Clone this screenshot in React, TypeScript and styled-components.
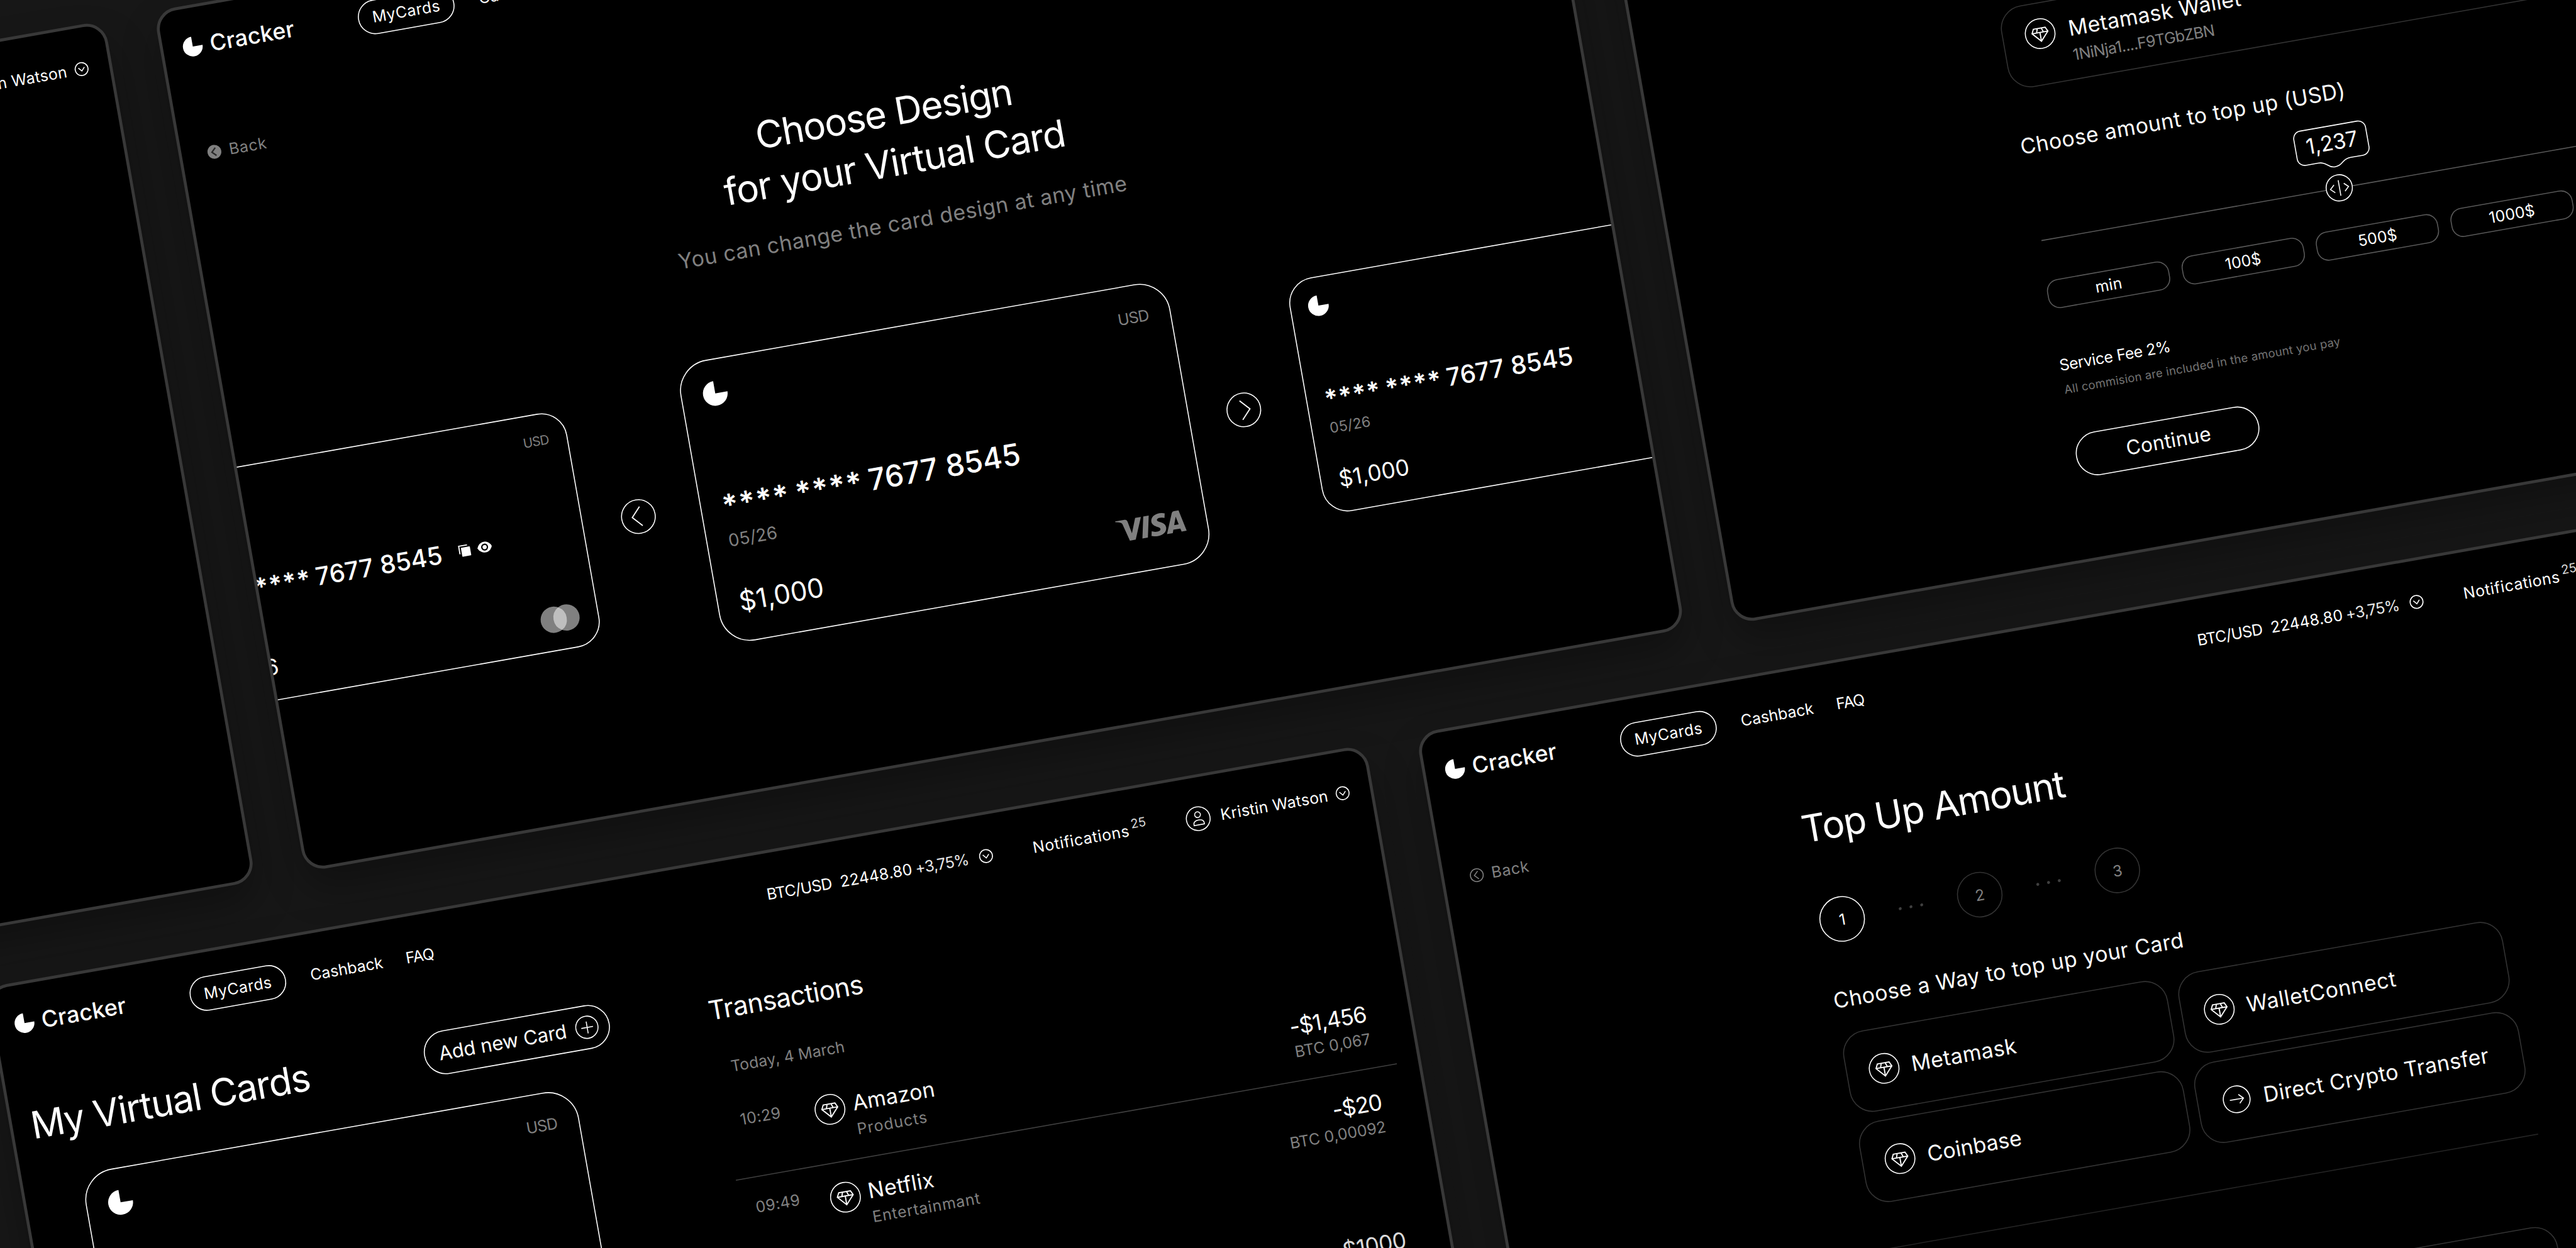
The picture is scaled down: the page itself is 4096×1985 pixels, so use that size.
import React from 'react';
import styled, { createGlobalStyle, css } from 'styled-components';
import { SiVisa } from 'react-icons/si';

const GlobalStyle = createGlobalStyle`
  *, *::before, *::after { box-sizing: border-box; }
  html, body { margin: 0; background: #171717; }
  body {
    color: #fff;
    font-family: Inter, "Liberation Sans", sans-serif;
    line-height: 1;
    white-space: nowrap;
    overflow: hidden;
  }
  svg { display: block; overflow: visible; flex: none; }
`;

const muted = '#808080';

/* ---------- board ---------- */

const Viewport = styled.div`
  width: 100vw;
  height: 100vh;
  overflow: hidden;
  background: #171717;
`;

const Board = styled.div`
  position: relative;
  transform-origin: 0 0;
  transform: scale(0.78769) rotate(-10deg);
`;

const Screen = styled.section<{ $x: number; $y: number; $h?: number }>`
  position: absolute;
  left: ${(p) => p.$x}px;
  top: ${(p) => p.$y}px;
  width: 2829px;
  height: ${(p) => p.$h ?? 1765}px;
  display: flex;
  flex-direction: column;
  border: 6px solid #383838;
  border-radius: 44px;
  background: #000;
  overflow: hidden;
  box-shadow: 0 40px 80px rgba(0, 0, 0, 0.3);
`;

/* ---------- type ---------- */

const Text = styled.span<{ $ls?: number }>`
  font-size: 31.5px;
  letter-spacing: ${(p) => p.$ls ?? 0}em;
`;
const Muted = styled(Text)`
  color: ${muted};
`;
const Label = styled(Text)`
  font-size: 43px;
`;
const Title = styled.h1<{ $lh?: number }>`
  margin: 0;
  font-size: 76px;
  font-weight: 400;
  letter-spacing: -0.023em;
  line-height: ${(p) => p.$lh ?? 76}px;
`;
const Subtitle = styled.h2`
  margin: 0;
  font-size: 43px;
  font-weight: 400;
  letter-spacing: 0.014em;
`;

/* ---------- icons ---------- */

const Ring = styled.span<{ $size: number; $color?: string }>`
  flex: none;
  width: ${(p) => p.$size}px;
  height: ${(p) => p.$size}px;
  display: grid;
  place-items: center;
  border: 2px solid ${(p) => p.$color ?? '#fff'};
  border-radius: 50%;
  color: ${(p) => p.$color ?? '#fff'};
  background: #000;
`;

const Stroke = styled.svg`
  fill: none;
  stroke: currentColor;
  stroke-width: 2;
`;

const Glyph = ({ d, w = 2 }: { d: string; w?: number }) => (
  <Stroke width="20" height="20" viewBox="-10 -10 20 20">
    <path d={d} strokeWidth={w} />
  </Stroke>
);

const Diamond = () => (
  <Ring $size={62}>
    <Glyph
      w={2.4}
      d="M-12 -11H12L16.2 -2.4L0 15.6L-16.2 -2.4ZM-16.2 -2.4H16.2M-4 -11L-7 -2.4M4 -11L7 -2.4M0 -2.4V15"
    />
  </Ring>
);

const ChevronDown = () => (
  <Ring $size={28}>
    <Glyph w={2} d="M-6.2 -3.2L0 3.8L6.2 -3.2" />
  </Ring>
);

const PieShape = styled.svg`
  width: calc(var(--pie, 40px) * var(--k, 1));
  height: calc(var(--pie, 40px) * var(--k, 1));
  fill: #fff;
`;
const Pie = () => (
  <PieShape viewBox="0 0 40 40">
    <path d="M20 20V0A20 20 0 1 0 40 20Z" />
  </PieShape>
);

/* ---------- header ---------- */

const HeaderBar = styled.header`
  flex: none;
  height: 118px;
  padding: 48px 42px 0 40px;
  display: flex;
  align-items: center;
`;
const Brand = styled.div`
  width: 358px;
  padding-bottom: 11px;
  display: flex;
  align-items: center;
  gap: 15px;
  font-size: 45.5px;
  font-weight: 500;
  letter-spacing: 0.004em;
`;
const Nav = styled.nav`
  display: flex;
  align-items: center;
  gap: 47px;
`;
const NavPill = styled.span`
  width: 197px;
  height: 70px;
  margin-right: 3px;
  display: grid;
  place-items: center;
  border: 2px solid #fff;
  border-radius: 35px;
  font-size: 31.5px;
  letter-spacing: 0.019em;
`;
const Account = styled.div`
  margin-left: auto;
  display: flex;
  align-items: center;
`;
const Ticker = styled.div`
  display: flex;
  align-items: center;
  gap: 17px;
  margin-right: 82px;
`;
const Change = styled(Text)`
  margin: 0 5px 0 -11px;
  color: #e6e6e6;
`;
const Alerts = styled.div`
  display: flex;
  align-items: center;
  gap: 5px;
  margin-right: 80px;
`;
const Count = styled.span`
  padding-bottom: 27px;
  font-size: 25.5px;
  color: #d9d9d9;
`;
const User = styled.div`
  display: flex;
  align-items: center;
  gap: 21px;
`;
const UserChevron = styled.div`
  margin-left: -5px;
`;

const Header = () => (
  <HeaderBar>
    <Brand>
      <Pie />
      <span>Cracker</span>
    </Brand>
    <Nav>
      <NavPill>MyCards</NavPill>
      <Text>Cashback</Text>
      <Text $ls={-0.035}>FAQ</Text>
    </Nav>
    <Account>
      <Ticker>
        <Text $ls={-0.026}>BTC/USD</Text>
        <Text $ls={0.011}>22448.80</Text>
        <Change $ls={-0.033}>+3,75%</Change>
        <ChevronDown />
      </Ticker>
      <Alerts>
        <Text $ls={0.024}>Notifications</Text>
        <Count>25</Count>
      </Alerts>
      <User>
        <Ring $size={50}>
          <Glyph d="M0 -14A5.8 5.8 0 1 1 0 -2.4A5.8 5.8 0 1 1 0 -14ZM-10.5 12.5V10C-10.5 5.5 -6.5 2.8 0 2.8S10.5 5.5 10.5 10V12.5Z" />
        </Ring>
        <Text $ls={0.013}>Kristin Watson</Text>
        <UserChevron>
          <ChevronDown />
        </UserChevron>
      </User>
    </Account>
  </HeaderBar>
);

/* ---------- back link ---------- */

const BackLink = styled.a`
  height: 28px;
  display: flex;
  align-items: center;
  gap: 16px;
  color: ${muted};
`;
const SolidDot = styled.span`
  width: 28px;
  height: 28px;
  display: grid;
  place-items: center;
  border-radius: 50%;
  background: ${muted};
  color: #2a2a2a;
`;
const backPath = 'M3 -8L-5 0L3 8';

const Back = ({ solid }: { solid?: boolean }) => (
  <BackLink>
    {solid ? (
      <SolidDot>
        <Glyph w={3} d={backPath} />
      </SolidDot>
    ) : (
      <Ring $size={28} $color={muted}>
        <Glyph d={backPath} />
      </Ring>
    )}
    <Text $ls={0.028}>Back</Text>
  </BackLink>
);

/* ---------- bank card ---------- */

const k = (n: number) => `calc(${n}px * var(--k))`;

const CardFrame = styled.article<{ $k: number }>`
  --k: ${(p) => p.$k};
  --pie: 50px;
  flex: none;
  width: ${k(1004)};
  height: ${k(575)};
  padding: ${k(43)} ${k(43)} 0 ${k(43)};
  display: flex;
  flex-direction: column;
  border: 2px solid #fff;
  border-radius: ${k(63)};
`;
const CardTop = styled.div`
  height: ${k(50)};
  display: flex;
  justify-content: space-between;
`;
const Currency = styled.span`
  padding-top: ${k(5)};
  font-size: ${k(31.5)};
  letter-spacing: -0.04em;
  color: ${muted};
`;
const CardNumber = styled.div`
  margin-top: ${k(171)};
  height: ${k(60)};
  display: flex;
  align-items: center;
  gap: ${k(12)};
  font-size: ${k(60.5)};
  font-weight: 500;
`;
const Mask = styled.span`
  font-weight: 600;
  letter-spacing: 0.03em;
`;
const CardTools = styled.span`
  margin-left: ${k(30)};
  display: flex;
  align-items: center;
  gap: ${k(17)};
`;
const Expiry = styled.span`
  margin-top: ${k(24)};
  font-size: ${k(35)};
  letter-spacing: 0.005em;
  color: ${muted};
`;
const CardBottom = styled.div`
  margin-top: ${k(76)};
  height: ${k(63)};
  display: flex;
  align-items: center;
  justify-content: space-between;
`;
const Balance = styled.span`
  font-size: ${k(54)};
`;
const VisaMark = styled(SiVisa)`
  width: 139px;
  height: 139px;
  margin: -50px 0 -38px;
  color: ${muted};
`;
const MasterMark = styled.svg`
  width: ${k(95)};
  height: ${k(63.7)};
  margin-top: ${k(12)};
  margin-right: ${k(1)};
`;
const CopyIcon = styled.svg`
  width: ${k(28)};
  height: ${k(28)};
`;
const EyeIcon = styled.svg`
  width: ${k(35)};
  height: ${k(26)};
`;

type CardProps = { scale?: number; balance: string; brand?: 'visa' | 'mastercard'; tools?: boolean };

const BankCard = ({ scale = 1, balance, brand, tools }: CardProps) => (
  <CardFrame $k={scale}>
    <CardTop>
      <Pie />
      <Currency>USD</Currency>
    </CardTop>
    <CardNumber>
      <Mask>****</Mask>
      <Mask>****</Mask>
      <span>7677 8545</span>
      {tools && (
        <CardTools>
          <CopyIcon viewBox="0 0 28 28" fill="#fff">
            <rect x="6" y="6" width="22" height="22" rx="1.5" />
            <path d="M1.4 21V1.4H22" fill="none" stroke="#fff" strokeWidth="2.8" />
          </CopyIcon>
          <EyeIcon viewBox="0 0 35 26">
            <path d="M0 13C3 5 9.5 0 17.5 0S32 5 35 13C32 21 25.5 26 17.5 26S3 21 0 13Z" fill="#fff" />
            <circle cx="17.5" cy="13" r="6.8" fill="#fff" stroke="#000" strokeWidth="3.4" />
          </EyeIcon>
        </CardTools>
      )}
    </CardNumber>
    <Expiry>05/26</Expiry>
    <CardBottom>
      <Balance>{balance}</Balance>
      {brand === 'visa' && <VisaMark />}
      {brand === 'mastercard' && (
        <MasterMark viewBox="0 0 94 63">
          <circle cx="31.5" cy="31.5" r="31.5" fill="#808080" />
          <circle cx="62.5" cy="31.5" r="31.5" fill="#808080" />
          <path d="M47 4.1A31.5 31.5 0 0 1 47 58.9A31.5 31.5 0 0 1 47 4.1Z" fill="#bfbfbf" />
        </MasterMark>
      )}
    </CardBottom>
  </CardFrame>
);

/* ---------- design picker ---------- */

const PickerBack = styled.div`
  margin: 163px 0 0 52px;
`;
const Intro = styled.div`
  margin-top: 94px;
  padding-left: 2px;
  display: flex;
  flex-direction: column;
  align-items: center;
  text-align: center;
`;
const SecondLine = styled.span`
  display: block;
  padding-left: 9px;
  letter-spacing: -0.0195em;
`;
const Hint = styled.p`
  margin: 50px 0 0;
  font-size: 43px;
  letter-spacing: 0.0165em;
  color: ${muted};
`;
const Carousel = styled.div`
  margin: 183px 0 0 -169px;
  display: flex;
  align-items: center;
`;
const Arrow = styled(Ring)<{ $gap: string }>`
  margin: ${(p) => p.$gap};
`;

const PickerScreen = () => (
  <Screen $x={301} $y={76}>
    <Header />
    <PickerBack>
      <Back solid />
    </PickerBack>
    <Intro>
      <Title $lh={101}>
        Choose Design
        <SecondLine>for your Virtual Card</SecondLine>
      </Title>
      <Hint>You can change the card design at any time</Hint>
    </Intro>
    <Carousel>
      <BankCard scale={0.8333} balance="$1,456" brand="mastercard" tools />
      <Arrow $size={70} $gap="0 91px 0 78px">
        <Glyph w={2.4} d="M5.5 -19.5L-12.5 0L5.5 19.5" />
      </Arrow>
      <BankCard balance="$1,000" brand="visa" />
      <Arrow $size={70} $gap="0 92px 0 76px">
        <Glyph w={2.4} d="M-5.5 -19.5L12.5 0L-5.5 19.5" />
      </Arrow>
      <BankCard scale={0.8333} balance="$1,000" />
    </Carousel>
  </Screen>
);

/* ---------- amount screen ---------- */

const AmountBody = styled.div`
  flex: 1;
  padding: 0 0 162px 732px;
  width: 2085px;
  display: flex;
  flex-direction: column;
  justify-content: flex-end;
`;
const box = css`
  border: 2px solid #333;
  border-radius: 47px;
`;
const WalletCard = styled.div`
  ${box}
  height: 167px;
  padding: 30px 44px;
  display: flex;
  gap: 27px;
`;
const WalletText = styled.div`
  padding-top: 9px;
  display: flex;
  flex-direction: column;
  gap: 17px;
`;
const AmountHeading = styled(Subtitle)`
  margin: 93px 0 44.6px -2px;
`;
const Tooltip = styled.div`
  position: relative;
  width: 149px;
  height: 85px;
  margin-left: 543px;
  padding: 13px 0 0 23px;
  font-size: 43px;
  letter-spacing: -0.009em;
`;
const Bubble = styled.svg`
  position: absolute;
  inset: 0;
`;
const Slider = styled.div`
  margin: 15px 0 0 7px;
  display: flex;
  align-items: center;
`;
const Track = styled.div<{ $w?: number }>`
  height: 2px;
  background: #595959;
  ${(p) => (p.$w ? `width: ${p.$w}px;` : 'flex: 1;')}
`;
const Chips = styled.div`
  margin-top: 55px;
  display: flex;
  gap: 25.5px;
`;
const Chip = styled.span`
  flex: none;
  width: 250px;
  height: 59px;
  display: grid;
  place-items: center;
  border: 2px solid #595959;
  border-radius: 24px;
  font-size: 31.5px;
  letter-spacing: 0.005em;
`;
const Fee = styled(Text)`
  margin: 98px 0 21.6px -1px;
`;
const FeeNote = styled.span`
  font-size: 23.5px;
  letter-spacing: 0.013em;
  color: #737373;
`;
const Continue = styled.button`
  margin: 82px 0 0;
  padding: 0 0 0 4px;
  width: 375px;
  height: 89px;
  border: 2px solid #fff;
  border-radius: 45px;
  background: #000;
  color: #fff;
  font: inherit;
  font-size: 40px;
  letter-spacing: 0.01em;
`;

const AmountScreen = () => (
  <Screen $x={3229} $y={100} $h={1749}>
    <AmountBody>
      <WalletCard>
        <Diamond />
        <WalletText>
          <Label $ls={0.01}>Metamask Wallet</Label>
          <Muted $ls={-0.027}>1NiNja1....F9TGbZBN</Muted>
        </WalletText>
      </WalletCard>
      <AmountHeading>Choose amount to top up (USD)</AmountHeading>
      <Tooltip>
        <Bubble width="149" height="85" viewBox="0 0 149 85" fill="none" stroke="#fff" strokeWidth="2">
          <path d="M16 1H133A15 15 0 0 1 148 16V56A15 15 0 0 1 133 71H108C99 71 95 74 89 78.5C80 86 68 86 60 78.5C54 74 50 71 41 71H16A15 15 0 0 1 1 56V16A15 15 0 0 1 16 1Z" />
        </Bubble>
        1,237
      </Tooltip>
      <Slider>
        <Track $w={583} />
        <Ring $size={55}>
          <Glyph d="M0 -16V16M-10 -8L-18.5 0L-10 8M10 -8L18.5 0L10 8" />
        </Ring>
        <Track />
      </Slider>
      <Chips>
        {['min', '100$', '500$', '1000$'].map((c) => (
          <Chip key={c}>{c}</Chip>
        ))}
      </Chips>
      <Fee $ls={-0.017}>Service Fee 2%</Fee>
      <FeeNote>All commision are included in the amount you pay</FeeNote>
      <Continue>Continue</Continue>
    </AmountBody>
  </Screen>
);

/* ---------- my cards screen ---------- */

const CardsBody = styled.div`
  padding-left: 40px;
  display: grid;
  grid-template-columns: 1379px 1355px;
`;
const CardsHead = styled.div`
  margin: 121px 0 0 -3px;
  width: 1186px;
  height: 89px;
  display: flex;
  align-items: center;
  justify-content: space-between;
`;
const AddButton = styled.span`
  width: 380px;
  height: 89px;
  padding: 0 21px 0 28px;
  display: flex;
  align-items: center;
  justify-content: space-between;
  border: 2px solid #fff;
  border-radius: 45px;
  font-size: 39.3px;
  letter-spacing: -0.005em;
`;
const CardSlot = styled.div`
  margin: 70px 0 0 78px;
`;
const Transactions = styled.section`
  padding-top: 149px;
  display: flex;
  flex-direction: column;
`;
const SectionTitle = styled.h2`
  margin: 0 0 75px 5px;
  font-size: 53.5px;
  font-weight: 400;
  letter-spacing: -0.013em;
`;
const Day = styled(Muted)`
  margin: 0 0 34px 30px;
`;
const Row = styled.div<{ $line?: boolean; $mt?: number }>`
  height: 180px;
  margin-top: ${(p) => p.$mt ?? 0}px;
  padding: 40px 44px 0 30px;
  display: grid;
  grid-template-columns: 151px 78px 1fr auto;
  border-bottom: 2px solid ${(p) => (p.$line ? '#404040' : 'transparent')};
`;
const Time = styled(Muted)`
  padding-top: 4px;
`;
const Merchant = styled.div`
  padding-top: 5px;
  display: flex;
  flex-direction: column;
  gap: 16px;
`;
const Sum = styled.div<{ $dim?: boolean }>`
  grid-column: 4;
  padding-top: 6px;
  display: flex;
  flex-direction: column;
  align-items: flex-end;
  gap: 13px;
  color: ${(p) => (p.$dim ? '#d9d9d9' : '#fff')};
`;
const Amount = styled(Text)`
  font-size: 45px;
`;

const CardsScreen = () => (
  <Screen $x={-376} $y={1959}>
    <Header />
    <CardsBody>
      <div>
        <CardsHead>
          <Title>My Virtual Cards</Title>
          <AddButton>
            Add new Card
            <Ring $size={47}>
              <Glyph d="M0 -12V12M-12 0H12" />
            </Ring>
          </AddButton>
        </CardsHead>
        <CardSlot>
          <BankCard scale={1.007} balance="$1,000" brand="visa" />
        </CardSlot>
      </div>
      <Transactions>
        <SectionTitle>Transactions</SectionTitle>
        <Day $ls={0.005}>Today, 4 March</Day>
        <Row $line>
          <Time $ls={0.014}>10:29</Time>
          <Diamond />
          <Merchant>
            <Label $ls={0.01}>Amazon</Label>
            <Muted $ls={0.045}>Products</Muted>
          </Merchant>
          <Sum>
            <Amount $ls={-0.028}>-$1,456</Amount>
            <Muted>BTC 0,067</Muted>
          </Sum>
        </Row>
        <Row>
          <Time $ls={0.014}>09:49</Time>
          <Diamond />
          <Merchant>
            <Label $ls={0.015}>Netflix</Label>
            <Muted $ls={0.034}>Entertainmant</Muted>
          </Merchant>
          <Sum>
            <Amount $ls={-0.028}>-$20</Amount>
            <Muted $ls={0.002}>BTC 0,00092</Muted>
          </Sum>
        </Row>
        <Row $mt={103}>
          <Sum $dim>
            <Amount $ls={-0.014}>$1000</Amount>
          </Sum>
        </Row>
      </Transactions>
    </CardsBody>
  </Screen>
);

/* ---------- top up screen ---------- */

const TopUpBody = styled.div`
  padding-left: 52px;
  display: grid;
  grid-template-columns: 679px 1354px;
`;
const TopUpBack = styled.div`
  padding-top: 165px;
`;
const TopUpMain = styled.div`
  padding-top: 164px;
`;
const TopUpTitle = styled(Title)`
  margin-left: -3px;
`;
const Steps = styled.div`
  margin: 108px 0 93px;
  display: flex;
  align-items: center;
  gap: 70px;
`;
const Step = styled(Ring)<{ $active?: boolean }>`
  border-color: ${(p) => (p.$active ? '#fff' : '#333')};
  color: ${(p) => (p.$active ? '#fff' : muted)};
  font-size: 31px;
`;
const Dots = styled.span`
  width: 50px;
  display: flex;
  justify-content: space-between;
`;
const Dot = styled.i`
  width: 6px;
  height: 6px;
  border-radius: 50%;
  background: #404040;
`;
const Ways = styled.div`
  margin-top: 47px;
  display: grid;
  grid-template-columns: 665px 665px;
  gap: 19px 22px;
`;
const Way = styled.div`
  ${box}
  height: 166px;
  padding-left: 44px;
  display: flex;
  align-items: center;
  gap: 25px;
`;
const ArrowRing = styled(Ring)`
  margin: 0 2px 0 6px;
`;
const Divider = styled.hr`
  width: 100%;
  height: 2px;
  margin: 91px 0 182px;
  border: 0;
  background: #242424;
`;
const EmptyCard = styled.div`
  ${box}
  height: 167px;
`;

const ThreeDots = () => (
  <Dots>
    <Dot />
    <Dot />
    <Dot />
  </Dots>
);

const TopUpScreen = () => (
  <Screen $x={2557} $y={1955}>
    <Header />
    <TopUpBody>
      <TopUpBack>
        <Back />
      </TopUpBack>
      <TopUpMain>
        <TopUpTitle>Top Up Amount</TopUpTitle>
        <Steps>
          <Step $size={92} $active>
            1
          </Step>
          <ThreeDots />
          <Step $size={92}>2</Step>
          <ThreeDots />
          <Step $size={92}>3</Step>
        </Steps>
        <Subtitle>Choose a Way to top up your Card</Subtitle>
        <Ways>
          <Way>
            <Diamond />
            <Label $ls={0.013}>Metamask</Label>
          </Way>
          <Way>
            <Diamond />
            <Label $ls={0.018}>WalletConnect</Label>
          </Way>
          <Way>
            <Diamond />
            <Label $ls={0.003}>Coinbase</Label>
          </Way>
          <Way>
            <ArrowRing $size={56}>
              <Glyph d="M-14 0H14M5 -9L14 0L5 9" />
            </ArrowRing>
            <Label $ls={0.009}>Direct Crypto Transfer</Label>
          </Way>
        </Ways>
        <Divider />
        <EmptyCard />
      </TopUpMain>
    </TopUpBody>
  </Screen>
);

const AccountScreen = () => (
  <Screen $x={-2629} $y={77}>
    <Header />
  </Screen>
);

export default function App() {
  return (
    <>
      <GlobalStyle />
      <Viewport>
        <Board>
          <AccountScreen />
          <PickerScreen />
          <AmountScreen />
          <CardsScreen />
          <TopUpScreen />
        </Board>
      </Viewport>
    </>
  );
}
